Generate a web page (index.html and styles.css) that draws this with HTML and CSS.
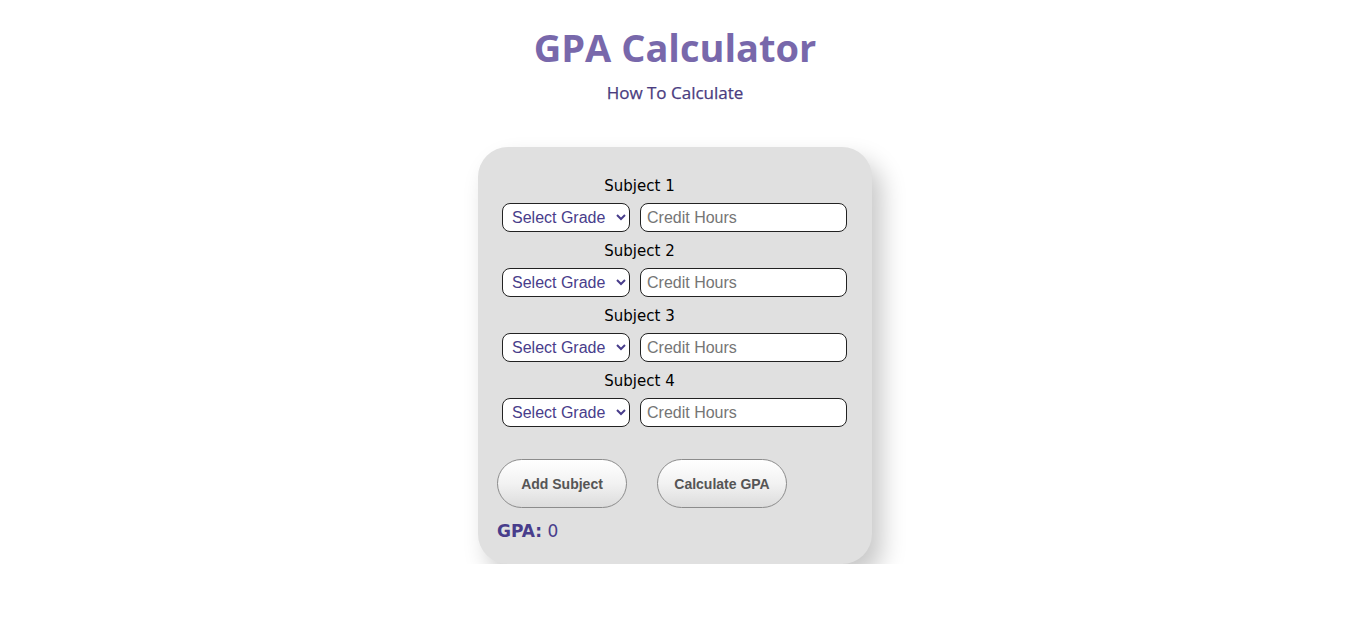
FILE: index.html
```html
<!DOCTYPE html>
<html lang="en">
<head>
<meta charset="utf-8">
<title>GPA Calculator</title>
<link rel="stylesheet" href="styles.css">
</head>
<body>
<header class="header">
  <h1 class="title">GPA Calculator</h1>
  <a class="how" href="#">How To Calculate</a>
</header>
<main class="card">
  <div class="subjects">
    <div class="subject">
      <div class="label">Subject 1</div>
      <div class="row">
        <select class="grade"><option>Select Grade</option><option>A</option><option>B</option><option>C</option></select>
        <input class="hours" type="text" placeholder="Credit Hours">
      </div>
    </div>
    <div class="subject">
      <div class="label">Subject 2</div>
      <div class="row">
        <select class="grade"><option>Select Grade</option><option>A</option><option>B</option><option>C</option></select>
        <input class="hours" type="text" placeholder="Credit Hours">
      </div>
    </div>
    <div class="subject">
      <div class="label">Subject 3</div>
      <div class="row">
        <select class="grade"><option>Select Grade</option><option>A</option><option>B</option><option>C</option></select>
        <input class="hours" type="text" placeholder="Credit Hours">
      </div>
    </div>
    <div class="subject">
      <div class="label">Subject 4</div>
      <div class="row">
        <select class="grade"><option>Select Grade</option><option>A</option><option>B</option><option>C</option></select>
        <input class="hours" type="text" placeholder="Credit Hours">
      </div>
    </div>
  </div>
  <div class="buttons">
    <button class="btn">Add Subject</button>
    <button class="btn">Calculate GPA</button>
  </div>
  <p class="result"><b>GPA:</b> <span>0</span></p>
</main>
</body>
</html>
```

FILE: styles.css
```css
html, body {
  margin: 0;
  padding: 0;
  background: #ffffff;
}
body {
  font-family: "Open Sans", "Noto Sans", sans-serif;
  padding-right: 3px;
}
.header {
  display: flex;
  flex-direction: column;
  align-items: center;
}
.title {
  margin: 21px 0 0;
  font-size: 38px;
  line-height: 52px;
  font-weight: 700;
  color: #7868ab;
}
.how {
  margin-top: 8px;
  font-size: 17px;
  line-height: 24px;
  font-weight: 500;
  color: #4a3c80;
  text-decoration: none;
  -webkit-text-stroke: 0.25px #4a3c80;
}
.card {
  width: 394px;
  box-sizing: border-box;
  margin: 42px auto 0;
  padding: 29px 19px 21px;
  background: #e0e0e0;
  border-radius: 30px;
  box-shadow: 10px 14px 24px rgba(0, 0, 0, 0.22);
}
.subjects {
  padding: 0 0 0 5px;
  display: flex;
  flex-direction: column;
  gap: 9px;
}
.label {
  width: 275px;
  text-align: center;
  font-family: "DejaVu Sans", sans-serif;
  font-size: 15px;
  line-height: 20px;
  color: #000;
  margin-bottom: 7px;
}
.row {
  display: flex;
  gap: 10px;
}
.grade {
  width: 128px;
  height: 29px;
  box-sizing: border-box;
  border: 1px solid #222;
  border-radius: 8px;
  background: #fff;
  font-family: "Liberation Sans", Arial, sans-serif;
  font-size: 16px;
  color: #483d8b;
  padding: 0 4px 0 5px;
}
.hours {
  width: 207px;
  height: 29px;
  box-sizing: border-box;
  border: 1px solid #222;
  border-radius: 8px;
  background: #fff;
  font-family: "Liberation Sans", Arial, sans-serif;
  font-size: 16px;
  padding: 0 6px;
  margin: 0;
}
.hours::placeholder {
  color: #757575;
}
.buttons {
  display: flex;
  gap: 30px;
  margin-top: 32px;
}
.btn {
  width: 130px;
  height: 49px;
  border-radius: 25px;
  border: 1px solid #8c8c8c;
  background: linear-gradient(to bottom, #ffffff 0%, #f2f2f2 50%, #dcdcdc 100%);
  font-family: "Liberation Sans", Arial, sans-serif;
  font-weight: 700;
  font-size: 14px;
  color: #555;
  cursor: pointer;
}
.result {
  margin: 11px 0 0;
  font-family: "DejaVu Sans", sans-serif;
  font-size: 17px;
  line-height: 24px;
  color: #483d8b;
}
```
